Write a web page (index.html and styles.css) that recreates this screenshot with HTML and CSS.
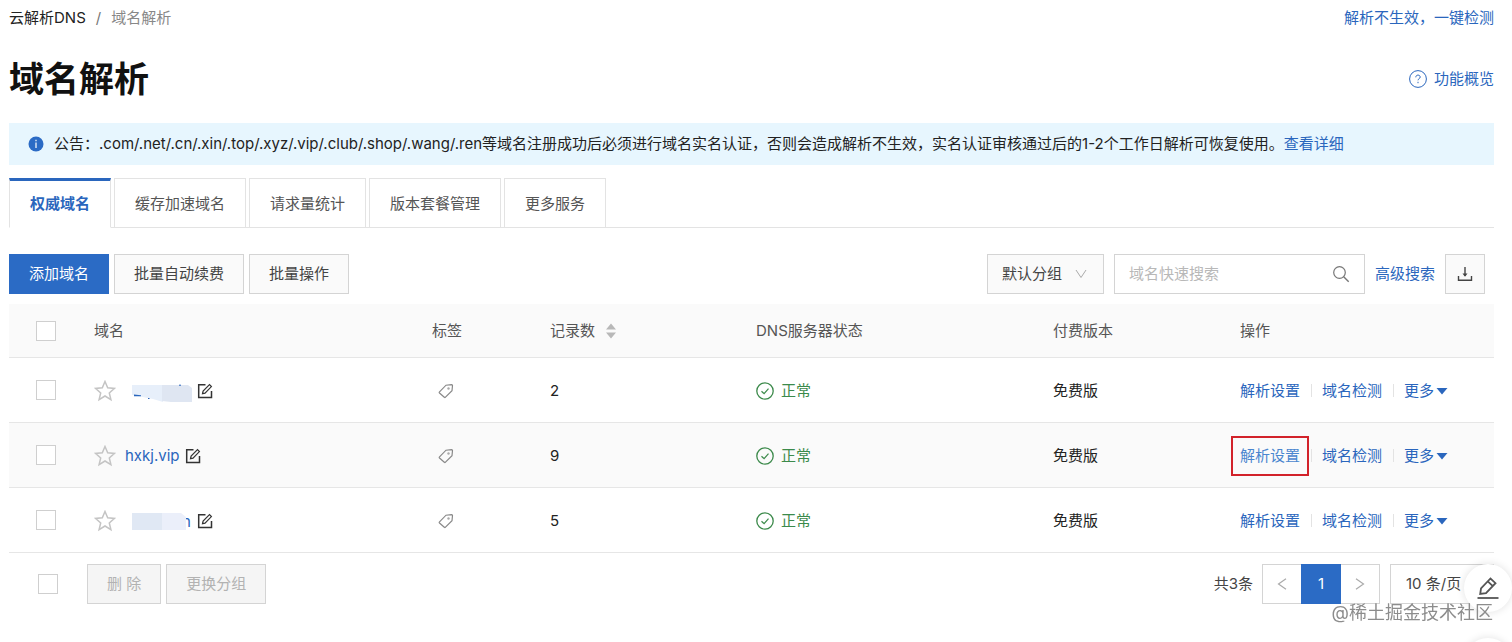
FILE: index.html
```html
<!DOCTYPE html>
<html lang="zh-CN">
  <head>
    <meta charset="UTF-8" />
    <meta name="viewport" content="width=device-width, initial-scale=1.0" />
    <title>域名解析</title>
    <link rel="stylesheet" href="styles.css">
  </head>
  <body>

    <!-- icons -->
    <svg class="sprite" aria-hidden="true">
      <symbol id="icon-star" viewBox="0 0 22 22">
        <path d="M11 1.500l2.700 6.300 6.800.6-5.200 4.500 1.600 6.700-5.900-3.600-5.900 3.600 1.600-6.700L1.500 8.400l6.800-.6z" fill="none" stroke="#c4c4c4" stroke-width="1.500" />
      </symbol>
      <symbol id="icon-edit" viewBox="0 0 16 16">
        <path d="M8.500 1.700H1.700v12.800h12.800V8" fill="none" stroke="#333" stroke-width="1.500" />
        <path d="M5.500 10.700l.6-2.600 6.400-6.400 1.900 1.900L8 10.100z" fill="none" stroke="#333" stroke-width="1.200" />
      </symbol>
      <symbol id="icon-tag" viewBox="0 0 16 16">
        <path d="M1.500 8.800L8 2.200l5.600-.6c.6 0 .9.300.9.900L14 7.700l-6.500 6.500c-.4.400-.8.400-1.200 0L1.500 10c-.4-.4-.4-.8 0-1.200z" fill="none" stroke="#888" stroke-width="1.200" />
        <circle cx="10.500" cy="5.500" r="1.200" fill="#aaa" />
      </symbol>
      <symbol id="icon-ok" viewBox="0 0 18 18">
        <circle cx="9" cy="9" r="8.200" fill="none" stroke="#3c8a4b" stroke-width="1.300" />
        <path d="M5.500 9.200l2.600 2.500 4.400-5" fill="none" stroke="#3c8a4b" stroke-width="1.200" />
      </symbol>
      <symbol id="icon-caret" viewBox="0 0 12 8">
        <path d="M.5 1h11L6 7.500z" fill="#2a66bd" />
      </symbol>
    </svg>

    <div class="page">
      <div class="topbar">
        <div class="breadcrumb">
          <a href="#">云解析DNS</a><span class="slash">/</span><span class="current">域名解析</span>
        </div>
        <a class="link" href="#">解析不生效，一键检测</a>
      </div>

      <div class="heading">
        <h1>域名解析</h1>
        <a class="link overview" href="#">
          <svg width="18" height="18" viewBox="0 0 18 18">
            <circle cx="9" cy="9" r="8.400" fill="none" stroke="#2a66bd" />
            <path d="M6.800 7.300c0-1.400 1-2.200 2.200-2.200s2.200.8 2.200 2c0 1.500-2.200 1.600-2.200 3.200M9 11.800v1.400" fill="none" stroke="#2a66bd" />
          </svg>
          功能概览
        </a>
      </div>

      <div class="notice">
        <svg width="16" height="16" viewBox="0 0 16 16">
          <circle cx="8" cy="8" r="7.500" fill="#2b6bc5" />
          <path d="M8 3.800v1.400M8 6.600v5.400" stroke="#fff" stroke-width="1.200" />
        </svg>
        <p>公告：.com/.net/.cn/.xin/.top/.xyz/.vip/.club/.shop/.wang/.ren等域名注册成功后必须进行域名实名认证，否则会造成解析不生效，实名认证审核通过后的1-2个工作日解析可恢复使用。<a class="link" href="#">查看详细</a></p>
      </div>

      <div class="tabs">
        <button type="button" class="tab active">权威域名</button>
        <button type="button" class="tab">缓存加速域名</button>
        <button type="button" class="tab">请求量统计</button>
        <button type="button" class="tab">版本套餐管理</button>
        <button type="button" class="tab">更多服务</button>
      </div>

      <div class="toolbar">
        <button type="button" class="btn primary">添加域名</button>
        <button type="button" class="btn">批量自动续费</button>
        <button type="button" class="btn">批量操作</button>
        <div class="filters">
          <div class="select">
            <select aria-label="分组">
              <option>默认分组</option>
            </select>
            <svg width="12" height="10" viewBox="0 0 12 10">
              <path d="M1 1l5 7.500L11 1" fill="none" stroke="#aaa" />
            </svg>
          </div>
          <div class="search">
            <input type="text" placeholder="域名快速搜索" aria-label="域名快速搜索" />
            <svg width="18" height="18" viewBox="0 0 18 18">
              <circle cx="7.500" cy="7.500" r="5.800" fill="none" stroke="#777" stroke-width="1.200" />
              <path d="M11.700 11.700l5 5" stroke="#777" stroke-width="1.400" />
            </svg>
          </div>
          <a class="link" href="#">高级搜索</a>
          <button type="button" class="btn download" aria-label="下载">
            <svg width="16" height="16" viewBox="0 0 16 16">
              <path d="M1.500 10v4.200h13V10M8 1v9" fill="none" stroke="#444" stroke-width="1.400" />
              <path d="M5.500 7.500h5L8 10.700z" fill="#444" />
            </svg>
          </button>
        </div>
      </div>

      <table class="domains">
        <colgroup>
          <col class="col-check" />
          <col class="col-name" />
          <col class="col-tag" />
          <col class="col-count" />
          <col class="col-dns" />
          <col class="col-plan" />
          <col class="col-ops" />
        </colgroup>
        <thead>
          <tr>
            <th class="check"><input type="checkbox" aria-label="全选" /></th>
            <th>域名</th>
            <th>标签</th>
            <th>
              <div class="cell sort">
                记录数
                <svg width="10" height="16" viewBox="0 0 10 16">
                  <path d="M0 6.500L5 .5l5 6zM0 9.500l5 6 5-6z" fill="#b8b8b8" />
                </svg>
              </div>
            </th>
            <th>DNS服务器状态</th>
            <th>付费版本</th>
            <th>操作</th>
          </tr>
        </thead>
        <tbody>
          <tr>
            <td class="check"><input type="checkbox" aria-label="选择" /></td>
            <td>
              <div class="cell name">
                <svg class="star"><use href="#icon-star" /></svg>
                <a href="#" aria-label="域名">
                  <svg width="67" height="22" viewBox="0 0 67 22">
                    <path d="M7 5h31v17l-10-3-21-4z" fill="#e7effa" />
                    <path d="M37 5h26l4 3v14H46l-9-1z" fill="#dfe6f2" />
                    <path d="M9 14.500l7 .7v1H9z" fill="#2a66bd" />
                    <path d="M23 18.500h1.500M54 5.200h2" stroke="#2a66bd" />
                  </svg>
                </a>
                <svg class="edit"><use href="#icon-edit" /></svg>
              </div>
            </td>
            <td class="tag"><svg class="icon"><use href="#icon-tag" /></svg></td>
            <td>2</td>
            <td><div class="cell status"><svg><use href="#icon-ok" /></svg>正常</div></td>
            <td>免费版</td>
            <td>
              <div class="cell ops">
                <a class="link" href="#">解析设置</a>
                <a class="link" href="#">域名检测</a>
                <a class="link" href="#">更多<svg class="caret"><use href="#icon-caret" /></svg></a>
              </div>
            </td>
          </tr>
          <tr class="hover">
            <td class="check"><input type="checkbox" aria-label="选择 hxkj.vip" /></td>
            <td>
              <div class="cell name">
                <svg class="star"><use href="#icon-star" /></svg>
                <a class="link" href="#">hxkj.vip</a>
                <svg class="edit"><use href="#icon-edit" /></svg>
              </div>
            </td>
            <td class="tag"><svg class="icon"><use href="#icon-tag" /></svg></td>
            <td>9</td>
            <td><div class="cell status"><svg><use href="#icon-ok" /></svg>正常</div></td>
            <td>免费版</td>
            <td>
              <div class="cell ops">
                <a class="link marked" href="#">解析设置</a>
                <a class="link" href="#">域名检测</a>
                <a class="link" href="#">更多<svg class="caret"><use href="#icon-caret" /></svg></a>
              </div>
            </td>
          </tr>
          <tr>
            <td class="check"><input type="checkbox" aria-label="选择" /></td>
            <td>
              <div class="cell name">
                <svg class="star"><use href="#icon-star" /></svg>
                <a href="#" aria-label="域名">
                  <svg width="67" height="22" viewBox="0 0 67 22">
                    <text x="57" y="17" font-size="15" fill="#2a66bd">n</text>
                    <path d="M7 3h31v17H7z" fill="#e0e8f4" />
                    <path d="M37 3h19l5 4v13H37z" fill="#ebeffa" />
                  </svg>
                </a>
                <svg class="edit"><use href="#icon-edit" /></svg>
              </div>
            </td>
            <td class="tag"><svg class="icon"><use href="#icon-tag" /></svg></td>
            <td>5</td>
            <td><div class="cell status"><svg><use href="#icon-ok" /></svg>正常</div></td>
            <td>免费版</td>
            <td>
              <div class="cell ops">
                <a class="link" href="#">解析设置</a>
                <a class="link" href="#">域名检测</a>
                <a class="link" href="#">更多<svg class="caret"><use href="#icon-caret" /></svg></a>
              </div>
            </td>
          </tr>
        </tbody>
      </table>

      <div class="footer">
        <input type="checkbox" aria-label="全选" />
        <div class="batch">
          <button type="button" class="btn" disabled>删 除</button>
          <button type="button" class="btn" disabled>更换分组</button>
        </div>
        <span class="total">共3条</span>
        <div class="pager">
          <button type="button" aria-label="上一页">
            <svg width="10" height="12" viewBox="0 0 10 12"><path d="M9 .7L1.500 6 9 11.300" fill="none" stroke="#aaa" stroke-width="1.200" /></svg>
          </button>
          <button type="button" class="on">1</button>
          <button type="button" aria-label="下一页">
            <svg width="10" height="12" viewBox="0 0 10 12"><path d="M1 .7L8.500 6 1 11.300" fill="none" stroke="#aaa" stroke-width="1.200" /></svg>
          </button>
        </div>
        <select class="page-size" aria-label="每页条数">
          <option>10 条/页</option>
        </select>
      </div>
    </div>

    <div class="floating">
      <button type="button" aria-label="反馈">
        <svg width="24" height="24" viewBox="0 0 24 24">
          <path d="M4.200 18l.8-5.500L14.500 2.500l5 4.700L10 17.200zM11.800 5.400l5 4.700" fill="none" stroke="#555" stroke-width="1.800" />
          <path d="M1.500 22h21" stroke="#555" stroke-width="1.800" />
        </svg>
      </button>
      <button type="button" aria-label="更多"></button>
    </div>
    <div class="watermark">@稀土掘金技术社区</div>

  </body>
</html>
```

FILE: styles.css
```css
* {
  box-sizing: border-box;
}

body {
  margin: 0;
  min-height: 100vh;
  background: #fff;
  color: #222;
  font-family: Inter, "Noto Sans CJK SC", sans-serif;
  font-size: 15px;
  line-height: 22px;
}

button, input, select {
  font: inherit;
  color: inherit;
  margin: 0;
}

svg {
  flex: none;
  display: block;
}

a {
  color: inherit;
  text-decoration: none;
}

h1, p {
  margin: 0;
}

.sprite {
  position: absolute;
  width: 0;
  height: 0;
}

.link {
  color: #2a66bd;
}

.page {
  padding: 7px 18px 0 9px;
}

/* header */
.topbar, .heading {
  display: flex;
  justify-content: space-between;
  align-items: center;
}

.slash {
  margin: 0 10px;
  color: #777;
}

.current {
  color: #888;
}

.heading {
  padding: 25px 0 19px;
}

.heading h1 {
  font-size: 35px;
  line-height: 50px;
  font-weight: 700;
  color: #111;
}

.overview {
  display: flex;
  align-items: center;
  gap: 7px;
}

.notice {
  display: flex;
  align-items: center;
  gap: 10px;
  min-height: 42px;
  padding: 10px 19px;
  background: #e7f6fe;
}

/* tabs */
.tabs {
  display: flex;
  gap: 3px;
  margin-top: 13px;
  box-shadow: inset 0 -1px #e3e3e3;
}

.tab {
  height: 50px;
  padding: 1px 20px 0;
  border: 1px solid #e3e3e3;
  background: #fff;
  color: #555;
}

.tab.active {
  padding-top: 0;
  border-top: 3px solid #2a66bd;
  border-bottom-color: #fff;
  color: #2a66bd;
  font-weight: 700;
}

/* toolbar */
.toolbar {
  display: flex;
  gap: 5px;
  padding: 26px 9px 10px 0;
}

.btn {
  height: 40px;
  padding: 0 19px;
  border: 1px solid #d4d4d4;
  background: #fafafa;
  color: #444;
}

.btn.primary {
  background: #2b6bc5;
  border-color: #2b6bc5;
  color: #fff;
}

.btn:disabled {
  background: #f5f5f5;
  color: #b2b2b2;
}

.filters {
  display: flex;
  align-items: center;
  gap: 10px;
  margin-left: auto;
}

.select, .search {
  display: flex;
  align-items: center;
  height: 40px;
  border: 1px solid #d4d4d4;
}

.select {
  background: #fafafa;
  color: #444;
  padding: 0 16px 0 14px;
  gap: 12px;
}

select {
  appearance: none;
  border: 0;
  padding: 0;
  background: none;
}

.search {
  width: 251px;
  padding: 0 14px;
}

.search input {
  flex: 1;
  min-width: 0;
  padding: 0;
  border: 0;
  background: none;
}

.search input::placeholder {
  color: #b8b8b8;
}

.btn.download {
  display: flex;
  align-items: center;
  justify-content: center;
  width: 40px;
  padding: 0;
}

/* table */
.domains {
  width: 100%;
  table-layout: fixed;
  border-collapse: separate;
  border-spacing: 0;
}

.col-check { width: 69px; }
.col-name { width: 338px; }
.col-tag { width: 118px; }
.col-count { width: 206px; }
.col-dns { width: 297px; }
.col-plan { width: 187px; }
.col-ops { width: 270px; }

.domains th, .domains td {
  padding: 0 16px;
  border-bottom: 1px solid #e6e6e6;
  text-align: left;
}

.domains th {
  height: 54px;
  background: #fafafa;
  color: #555;
  font-weight: 400;
}

.domains td {
  height: 65px;
  padding-top: 1px;
}

.domains .hover td {
  background: #fafafa;
}

.domains .check {
  padding: 0 0 0 27px;
}

input[type="checkbox"] {
  appearance: none;
  display: block;
  width: 20px;
  height: 20px;
  border: 1px solid #cfcfcf;
  background: #fff;
}

.cell {
  display: flex;
  align-items: center;
}

.sort {
  gap: 11px;
}

.name .star {
  width: 22px;
  height: 22px;
  margin-right: 9px;
}

.name .edit {
  width: 16px;
  height: 16px;
  margin-left: 5px;
}

.domains .tag {
  padding-left: 22px;
}

.tag .icon {
  width: 16px;
  height: 16px;
}

.status {
  gap: 7px;
  color: #3c8a4b;
}

.status svg {
  width: 18px;
  height: 18px;
}

.ops a {
  display: flex;
  align-items: center;
}

.ops a + a {
  margin-left: 11px;
  padding-left: 11px;
  background: linear-gradient(#e3e3e3, #e3e3e3) left center / 1px 13px no-repeat;
}

.ops .caret {
  width: 12px;
  height: 8px;
  margin-left: 2px;
}

.ops .marked {
  color: #4a86cf;
  outline: 2px solid #d2222a;
  outline-offset: 7px;
}

/* footer */
.footer {
  display: flex;
  align-items: center;
  padding: 11px 0 0 29px;
}

.batch {
  display: flex;
  gap: 5px;
  margin-left: 29px;
}

.total {
  margin: 0 9px 0 auto;
  color: #444;
}

.pager {
  display: flex;
  height: 40px;
  border: 1px solid #d4d4d4;
}

.pager button {
  display: flex;
  align-items: center;
  justify-content: center;
  width: 38px;
  padding: 0;
  border: 0;
  background: #fff;
}

.pager .on {
  width: 40px;
  margin: -1px 0;
  background: #2b6bc5;
  color: #fff;
}

.page-size {
  width: 104px;
  height: 40px;
  margin-left: 10px;
  padding: 0 15px;
  border: 1px solid #d4d4d4;
  color: #444;
}

/* round buttons over the page corner */
.floating {
  position: fixed;
  top: 556px;
  right: 0;
  bottom: 0;
  width: 56px;
  padding-top: 8px;
  overflow: hidden;
}

.floating button {
  display: flex;
  align-items: center;
  justify-content: center;
  width: 48px;
  height: 48px;
  margin: 0 0 26px 8px;
  padding: 0;
  border: 0;
  border-radius: 50%;
  background: #fff;
  box-shadow: 0 0 8px rgba(0, 0, 0, 0.12);
}

.watermark {
  position: fixed;
  right: 19px;
  bottom: 17px;
  color: #8c8c8c;
  font-size: 18px;
  line-height: 24px;
}
```
